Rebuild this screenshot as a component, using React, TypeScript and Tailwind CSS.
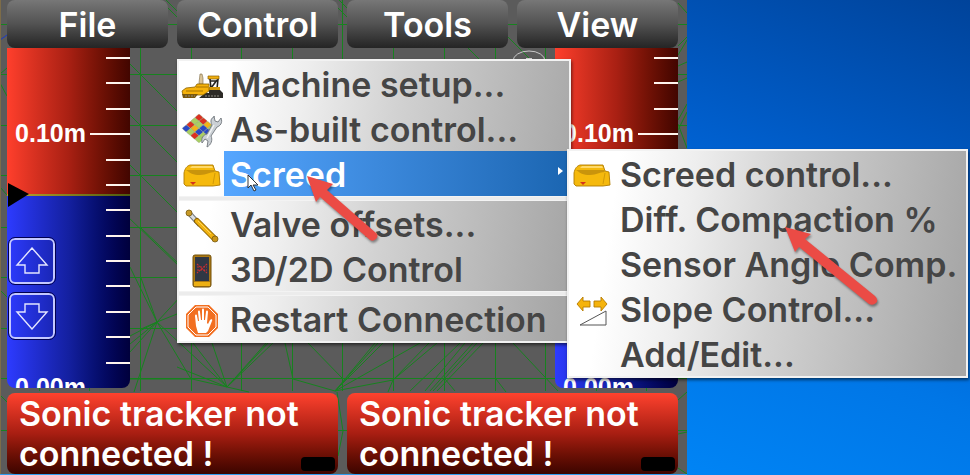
import { useState } from 'react';
import type { ReactNode } from 'react';

interface MenuEntry {
  label: string;
  icon?: ReactNode;
  separated?: boolean;
  children?: MenuEntry[];
}

const PaverIcon = () => (
  <svg width="42" height="26" viewBox="0 0 42 26">
    <path d="M18 10l1-9h2l1 4v6h-4z" fill="#d9c49a" stroke="#7d6a45" strokeWidth=".6" />
    <path d="M27 3h11v3H27z" fill="#f1b010" stroke="#8a6000" strokeWidth=".7" />
    <path d="M29 6l1 10M37 6l-1 10M30 15l6-8M29 8h7" stroke="#25231f" strokeWidth="1.6" fill="none" />
    <path d="M24 14h15v4H24z" fill="#d69a0c" />
    <path d="M28 17h11l3 3v5H18l6-5h4z" fill="#2c2a26" />
    <path d="M1 18l4-3 9-1 2-3h12v7l-6 4H2z" fill="#f6b20b" stroke="#8a6200" strokeWidth=".8" />
    <path d="M5 18h17M15 14h12" stroke="#a87400" strokeWidth="1" />
    <path d="M1 21h16l-3 4H2z" fill="#7a570c" />
    <path d="M4 23h10M24 23h14" stroke="#8e8c84" strokeWidth="1" strokeDasharray="2 1" />
  </svg>
);

const QUILT = ['#dc3020', '#dc3020', '#f2b31a', '#a9cf62', '#a9cf62', '#a9cf62', '#2b48c4', '#2b48c4', '#dc3020', '#f2b31a', '#2b48c4', '#a9cf62', '#2b48c4', '#a9cf62', '#dc3020', '#a9cf62'];

const AsBuiltIcon = () => (
  <svg width="42" height="36" viewBox="0 0 42 36">
    <g transform="translate(18 1) scale(1 .85) rotate(45)">
      {QUILT.map((color, i) => (
        <rect key={i} x={(i % 4) * 6} y={Math.floor(i / 4) * 6} width="6" height="6" rx="1" fill={color} stroke="#8b9a78" strokeWidth=".4" />
      ))}
    </g>
    <path
      d="M33 3l1 5 3 1 3-4c2 5-1 8-4 9l-6 9c2 4 0 9-4 11l1-6-3-2-3 4c-1-5 1-8 5-9l5-9c-2-4-1-7 2-8z"
      fill="#cbd0d5"
      stroke="#70767c"
      strokeWidth=".9"
    />
    <path d="M33 12l-7 13" stroke="#f3f5f6" strokeWidth="1.3" />
  </svg>
);

const ScreedIcon = () => (
  <svg width="38" height="24" viewBox="0 0 38 24">
    <path d="M1 9c1-5 3-7 6-8h23l2 6 4 1 1 13-7 1H3l-2-2z" fill="#f5b90d" stroke="#b07c00" strokeWidth=".9" />
    <path d="M9 2h20l1 2H7z" fill="#ffd968" />
    <path d="M3 6h28l1 2c-6 0-8 3-15 3S7 9 3 6z" fill="#c9940c" />
    <path d="M32 9l-2 11" stroke="#c89208" strokeWidth=".8" />
    <path d="M7 18h6l-3 3z" fill="#d4331c" />
  </svg>
);

const ValveIcon = () => (
  <svg width="36" height="36" viewBox="0 0 36 36">
    <path d="M5 5l11 12" stroke="#75797d" strokeWidth="5" />
    <path d="M5 5l11 12" stroke="#d8dcdf" strokeWidth="3" />
    <circle cx="5" cy="5" r="3" fill="#c79a28" stroke="#775a12" strokeWidth=".8" />
    <path d="M13 13l17 17" stroke="#8a6100" strokeWidth="6" strokeLinecap="round" />
    <path d="M13 13l17 17" stroke="#f0b210" strokeWidth="4" strokeLinecap="round" />
    <path d="M14 13l13 13" stroke="#ffd45a" strokeWidth="1" />
    <circle cx="31" cy="31" r="3" fill="#c89418" stroke="#775a12" strokeWidth=".8" />
  </svg>
);

const ControllerIcon = () => (
  <svg width="20" height="34" viewBox="0 0 20 34">
    <rect x="1" y="1" width="18" height="32" rx="2" fill="#ad7a14" stroke="#735008" />
    <rect x="3" y="3" width="14" height="24" fill="#303744" />
    <path d="M2 28h16v4H2z" fill="#edb014" />
    <path d="M5 10l10 9M15 10L5 19M5 13h10M5 16h10" stroke="#cc2e30" strokeWidth="1.2" strokeDasharray="2 1" />
  </svg>
);

const StopHandIcon = () => (
  <svg width="34" height="34" viewBox="0 0 34 34">
    <path d="M10 1h14l9 9v14l-9 9H10l-9-9V10z" fill="#f26f21" />
    <path d="M11 3h12l8 8v12l-8 8H11l-8-8V11z" fill="none" stroke="#fff" strokeWidth="1" />
    <path
      d="M13 29l-2-7-1-10c0-2 2-2 2 0l1 5h1l-1-9c0-2 2-2 2 0l1 8h1V6c0-2 2-2 2 0v10h1l1-8c0-2 2-2 2 0l-1 11 1 1 2-4c1-1 3-1 2 1l-4 10-2 2z"
      fill="#fff"
    />
  </svg>
);

const SlopeIcon = () => (
  <svg width="32" height="30" viewBox="0 0 32 30">
    <path d="M1 8l6-7v4h7v6H7v4z" fill="#f5b30c" stroke="#b57a00" strokeWidth=".9" />
    <path d="M31 8l-6-7v4h-7v6h7v4z" fill="#f5b30c" stroke="#b57a00" strokeWidth=".9" />
    <path d="M4 29h26V15z" fill="none" stroke="#555" />
  </svg>
);

const MENU: MenuEntry[] = [
  { label: 'Machine setup...', icon: <PaverIcon /> },
  { label: 'As-built control...', icon: <AsBuiltIcon /> },
  {
    label: 'Screed',
    icon: <ScreedIcon />,
    children: [
      { label: 'Screed control...', icon: <ScreedIcon /> },
      { label: 'Diff. Compaction %' },
      { label: 'Sensor Angle Comp.' },
      { label: 'Slope Control...', icon: <SlopeIcon /> },
      { label: 'Add/Edit...' },
    ],
  },
  { label: 'Valve offsets...', icon: <ValveIcon />, separated: true },
  { label: '3D/2D Control', icon: <ControllerIcon /> },
  { label: 'Restart Connection', icon: <StopHandIcon />, separated: true },
];

const panelClass =
  'absolute border-2 border-[#f2f2f2] bg-[linear-gradient(98deg,#ffffff_12%,#eeeeee_30%,#d2d2d2_52%,#a6a6a6_97%)] shadow-[1px_2px_3px_rgba(0,0,0,0.55)]';

function MenuRow({ entry, active, onSelect }: { entry: MenuEntry; active?: boolean; onSelect?: () => void }) {
  return (
    <button type="button" role="menuitem" onClick={onSelect} className="flex h-[45px] w-full items-stretch text-left">
      <span className="flex w-[45px] shrink-0 items-center justify-center pt-1">{entry.icon}</span>
      <span
        className={
          active
            ? 'mr-0.5 flex flex-1 items-center justify-between bg-linear-to-r from-[#55a6ff] to-[#1b66b2] pt-0.5 pr-1 pl-1.5 text-white'
            : 'flex flex-1 items-center pt-0.5 pl-1.5 text-[#454545]'
        }
      >
        <span className="whitespace-nowrap">{entry.label}</span>
        {active && (
          <svg width="5" height="8" viewBox="0 0 5 8" className="mb-2">
            <path d="M0 0l5 4-5 4z" fill="#fff" />
          </svg>
        )}
      </span>
    </button>
  );
}

function ControlMenu() {
  const [active, setActive] = useState('Screed');

  return (
    <div role="menu" className={`${panelClass} top-[59px] left-0 z-10 w-[394px] text-[34px] leading-10 font-semibold`}>
      {MENU.map((entry) => (
        <div key={entry.label} className="relative">
          {entry.separated && <div className="h-[5px] border-y border-white/40 bg-[#ececec]" />}
          <MenuRow
            entry={entry}
            active={active === entry.label}
            onSelect={() => setActive(active === entry.label ? '' : entry.label)}
          />
          {entry.children && active === entry.label && (
            <div role="menu" className={`${panelClass} -top-0.5 left-[388px] z-10 w-[401px]`}>
              {entry.children.map((child) => (
                <MenuRow key={child.label} entry={child} />
              ))}
              <svg width="100" height="86" viewBox="0 0 100 86" className="pointer-events-none absolute top-[75px] left-[215px] drop-shadow-[1px_2px_1px_rgba(0,0,0,0.4)]">
                <path d="M1 1l26 7-6 5 70 57q4 4 1 7t-7 1L15 21l-4 5z" fill="#eb4b45" />
              </svg>
            </div>
          )}
        </div>
      ))}
      <svg width="80" height="70" viewBox="0 0 80 70" className="pointer-events-none absolute top-[114px] left-[127px] drop-shadow-[1px_2px_1px_rgba(0,0,0,0.4)]">
        <path d="M1 1l26 8-6 6 49 43q3 3 0 6t-6 1L14 22l-4 5z" fill="#eb4b45" />
      </svg>
      {/* mouse pointer */}
      <svg width="12" height="18" viewBox="0 0 12 18" className="pointer-events-none absolute top-[113px] left-[68px]">
        <path d="M1 1v13l3-3 3 6 2-1-3-5h5z" fill="#fff" stroke="#222" strokeWidth=".9" />
      </svg>
    </div>
  );
}

// terrain triangulation behind the gauges
function TerrainMesh() {
  const rows = [25, 75, 126, 176, 228, 278, 329, 379, 431];
  const cols = [40, 90, 141, 192, 242, 293, 343, 394, 445, 496, 546, 597, 647];
  return (
    <svg viewBox="0 0 687 475" preserveAspectRatio="none" className="absolute inset-0 size-full">
      <g stroke="#17821f" strokeWidth="1" fill="none">
        {rows.map((y) => (
          <path key={y} d={`M0 ${y - 0.5}H687`} />
        ))}
        {cols.map((x) => (
          <path key={x} d={`M${x - 0.5} 0V391`} />
        ))}
        <path d="M128 62l54 54M128 113l54 54M128 163l54 54M128 217l52 50M141 228l40 38M160 0l30 30M330 0l40 40M445 25l50 50M496 25l50 50" />
        <path d="M157 322l-27-55M157 322l-16-44M157 322l24-26M157 322l-27 14M157 322l-27 22M157 322l-27 30M157 322l-23 70M157 322l34 57M157 322l70 65M157 322l25-10M157 322l-16 7" />
        <path d="M227 387l-35-8-62 0M227 387l-15-44M227 387l-34-44M227 387l47-45M227 387l42-45M227 387l40-45M227 387l-50-20M227 387l22 5" />
        <path d="M335 391l43-48M335 391l48-48M335 391l40-48M335 391l85-48M335 391l-42-12-8-36M335 391l58-11 44-37M343 379l-35-36M337 392l6 39M343 431l-5 25" />
        <path d="M393 380l36-37M393 380l-5 12M410 391l50-48M430 391l43-48M433 391l44-48M437 391l46-48M445 379l10 12M425 391l40-48M513 343l45 48M496 379l10 13" />
        <path d="M678 55l9-15M678 46l9-9M678 66l9-4M678 82l9-4M678 120l9-16M678 124l9 24M678 130l9-18M678 400l9-8M678 434l9-2M678 468l9 6M166 0l12 12M678 3l9 10" />
        <path d="M0 74l7-6M0 83l7 13M0 187l7 8M0 290l7 7M0 395l7 7M339 0l10 10" />
      </g>
      <path d="M0 40l7-5" stroke="#1838c8" />
      <path d="M0 0v475" stroke="#7d6c48" strokeWidth="2" />
      <ellipse cx="529" cy="61" rx="16" ry="10" fill="none" stroke="#c8c8c8" />
      <path d="M526 58h6v2h-6z" fill="#d0d0d0" />
    </svg>
  );
}

const arrowButtonClass =
  'flex size-[46px] items-center justify-center rounded-md border-2 border-[#c4c8ff] outline-1 outline-[#000050]';

function Gauge({ side }: { side: string }) {
  return (
    <section
      aria-label={`${side} gauge`}
      className="relative flex min-h-[340px] w-[123px] flex-col overflow-hidden rounded-b-lg text-[25px] font-bold text-white [font-family:'Liberation_Sans',sans-serif]"
    >
      <div className="grow-[146] bg-linear-to-r from-[#ff3f2c] via-[#a92013] to-[#420600]" />
      <div className="h-0.5 bg-linear-to-r from-[#c0a52c] to-[#4d5a10]" />
      <div className="grow-[192] bg-linear-to-r from-[#2d3bff] via-[#1420a0] to-[#00003c]" />

      <div className="absolute inset-x-0 top-[10px] bottom-0 flex flex-col justify-between">
        {Array.from({ length: 14 }, (_, i) => {
          const major = i === 3 || i === 13;
          return (
            <div key={i} className="flex h-0 items-center justify-end gap-1">
              {major && <span>{i === 3 ? '0.10m' : '0.00m'}</span>}
              <span
                className={
                  i === 13 ? 'w-10 shrink-0' : major ? 'h-0.5 w-10 shrink-0 bg-[#fff4ee]' : 'h-0.5 w-6 shrink-0 bg-[#fff4ee]'
                }
              />
            </div>
          );
        })}
      </div>

      <svg width="21" height="24" viewBox="0 0 21 24" className="absolute top-[135px] left-px">
        <path d="M0 0l21 11L0 24z" fill="#000" />
      </svg>

      <div className="absolute top-[190px] left-0.5 flex flex-col gap-[9px]">
        <button type="button" aria-label={`${side} up`} className={arrowButtonClass}>
          <svg width="34" height="28" viewBox="0 0 34 28">
            <path d="M17 1l15 17h-8v8H10v-8H2z" fill="none" stroke="#e4e6ff" strokeWidth="1.4" />
          </svg>
        </button>
        <button type="button" aria-label={`${side} down`} className={arrowButtonClass}>
          <svg width="34" height="28" viewBox="0 0 34 28">
            <path d="M17 27L2 10h8V2h14v8h8z" fill="none" stroke="#e4e6ff" strokeWidth="1.4" />
          </svg>
        </button>
      </div>
    </section>
  );
}

function StatusPanel() {
  return (
    <div
      role="status"
      className="relative h-[81px] flex-1 overflow-hidden rounded-lg bg-linear-to-b from-[#ff422e] via-[#a81e12] to-[#3c0500] pt-px pl-3 text-[34px] leading-10 font-semibold text-white"
    >
      Sonic tracker not
      <br />
      connected !
      <span className="absolute right-[3px] bottom-[3px] h-3.5 w-[34px] rounded-sm bg-black" />
    </div>
  );
}

export default function App() {
  const [open, setOpen] = useState('Control');

  return (
    <div className="flex min-h-screen overflow-hidden bg-[#0078e8] [font-family:Inter,'Noto_Sans',sans-serif]">
      <main className="relative z-10 flex grow-[687] basis-0 flex-col bg-[#5b5b5b]">
        <TerrainMesh />
        <nav className="relative z-10 flex gap-[9px] pr-[9px] pl-[7px]">
          {['File', 'Control', 'Tools', 'View'].map((name) => (
            <div key={name} className="relative flex-1">
              <button
                type="button"
                aria-expanded={open === name}
                onClick={() => setOpen(open === name ? '' : name)}
                className="h-12 w-full rounded-lg bg-linear-to-b from-[#777777] via-[#525252] to-[#252525] pt-0.5 text-[34px] leading-10 font-semibold text-white"
              >
                {name}
              </button>
              {name === 'Control' && open === name && <ControlMenu />}
            </div>
          ))}
        </nav>
        <div className="relative flex flex-1 items-stretch justify-between pr-[9px] pl-[7px]">
          <Gauge side="Left" />
          <Gauge side="Right" />
        </div>
        <div className="relative mt-[5px] flex gap-[9px] pr-[9px] pl-[7px]">
          <StatusPanel />
          <StatusPanel />
        </div>
        <div className="relative h-px bg-[#2f9df0]" />
      </main>
      <div className="grow-[283] basis-0 bg-[linear-gradient(22deg,#0084f5_0%,#0076e6_30%,#0060cf_58%,#00439a_100%)]" />
    </div>
  );
}
